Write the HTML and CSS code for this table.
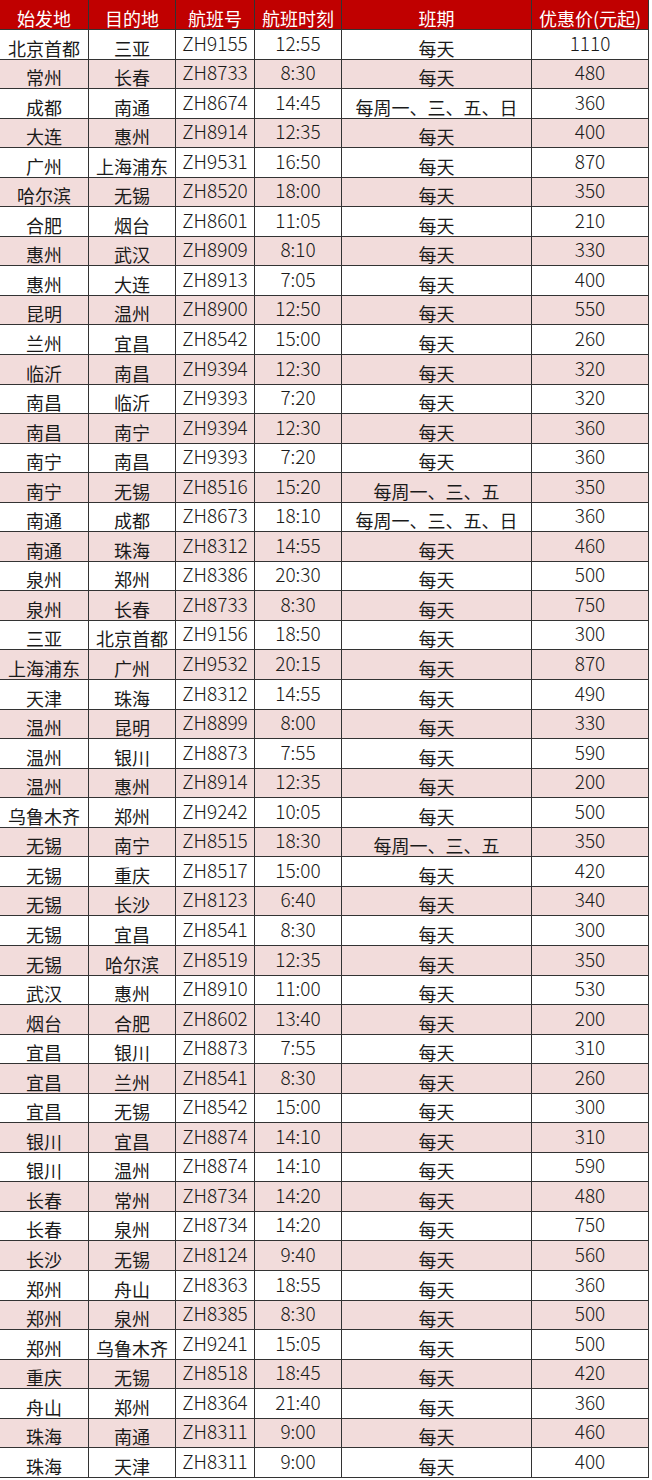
FILE: index.html
```html
<!DOCTYPE html>
<html lang="zh-CN">
<head>
<meta charset="utf-8">
<title>航班时刻表</title>
<link rel="stylesheet" href="styles.css">
</head>
<body>
<div class="table">
  <div class="row head">
    <div class="c">始发地</div><div class="c">目的地</div><div class="c">航班号</div><div class="c">航班时刻</div><div class="c">班期</div><div class="c">优惠价(元起)</div>
  </div>
  <div class="row"><div class="c">北京首都</div><div class="c">三亚</div><div class="c n">ZH9155</div><div class="c n">12:55</div><div class="c">每天</div><div class="c n">1110</div></div>
  <div class="row alt"><div class="c">常州</div><div class="c">长春</div><div class="c n">ZH8733</div><div class="c n">8:30</div><div class="c">每天</div><div class="c n">480</div></div>
  <div class="row"><div class="c">成都</div><div class="c">南通</div><div class="c n">ZH8674</div><div class="c n">14:45</div><div class="c">每周一、三、五、日</div><div class="c n">360</div></div>
  <div class="row alt"><div class="c">大连</div><div class="c">惠州</div><div class="c n">ZH8914</div><div class="c n">12:35</div><div class="c">每天</div><div class="c n">400</div></div>
  <div class="row"><div class="c">广州</div><div class="c">上海浦东</div><div class="c n">ZH9531</div><div class="c n">16:50</div><div class="c">每天</div><div class="c n">870</div></div>
  <div class="row alt"><div class="c">哈尔滨</div><div class="c">无锡</div><div class="c n">ZH8520</div><div class="c n">18:00</div><div class="c">每天</div><div class="c n">350</div></div>
  <div class="row"><div class="c">合肥</div><div class="c">烟台</div><div class="c n">ZH8601</div><div class="c n">11:05</div><div class="c">每天</div><div class="c n">210</div></div>
  <div class="row alt"><div class="c">惠州</div><div class="c">武汉</div><div class="c n">ZH8909</div><div class="c n">8:10</div><div class="c">每天</div><div class="c n">330</div></div>
  <div class="row"><div class="c">惠州</div><div class="c">大连</div><div class="c n">ZH8913</div><div class="c n">7:05</div><div class="c">每天</div><div class="c n">400</div></div>
  <div class="row alt"><div class="c">昆明</div><div class="c">温州</div><div class="c n">ZH8900</div><div class="c n">12:50</div><div class="c">每天</div><div class="c n">550</div></div>
  <div class="row"><div class="c">兰州</div><div class="c">宜昌</div><div class="c n">ZH8542</div><div class="c n">15:00</div><div class="c">每天</div><div class="c n">260</div></div>
  <div class="row alt"><div class="c">临沂</div><div class="c">南昌</div><div class="c n">ZH9394</div><div class="c n">12:30</div><div class="c">每天</div><div class="c n">320</div></div>
  <div class="row"><div class="c">南昌</div><div class="c">临沂</div><div class="c n">ZH9393</div><div class="c n">7:20</div><div class="c">每天</div><div class="c n">320</div></div>
  <div class="row alt"><div class="c">南昌</div><div class="c">南宁</div><div class="c n">ZH9394</div><div class="c n">12:30</div><div class="c">每天</div><div class="c n">360</div></div>
  <div class="row"><div class="c">南宁</div><div class="c">南昌</div><div class="c n">ZH9393</div><div class="c n">7:20</div><div class="c">每天</div><div class="c n">360</div></div>
  <div class="row alt"><div class="c">南宁</div><div class="c">无锡</div><div class="c n">ZH8516</div><div class="c n">15:20</div><div class="c">每周一、三、五</div><div class="c n">350</div></div>
  <div class="row"><div class="c">南通</div><div class="c">成都</div><div class="c n">ZH8673</div><div class="c n">18:10</div><div class="c">每周一、三、五、日</div><div class="c n">360</div></div>
  <div class="row alt"><div class="c">南通</div><div class="c">珠海</div><div class="c n">ZH8312</div><div class="c n">14:55</div><div class="c">每天</div><div class="c n">460</div></div>
  <div class="row"><div class="c">泉州</div><div class="c">郑州</div><div class="c n">ZH8386</div><div class="c n">20:30</div><div class="c">每天</div><div class="c n">500</div></div>
  <div class="row alt"><div class="c">泉州</div><div class="c">长春</div><div class="c n">ZH8733</div><div class="c n">8:30</div><div class="c">每天</div><div class="c n">750</div></div>
  <div class="row"><div class="c">三亚</div><div class="c">北京首都</div><div class="c n">ZH9156</div><div class="c n">18:50</div><div class="c">每天</div><div class="c n">300</div></div>
  <div class="row alt"><div class="c">上海浦东</div><div class="c">广州</div><div class="c n">ZH9532</div><div class="c n">20:15</div><div class="c">每天</div><div class="c n">870</div></div>
  <div class="row"><div class="c">天津</div><div class="c">珠海</div><div class="c n">ZH8312</div><div class="c n">14:55</div><div class="c">每天</div><div class="c n">490</div></div>
  <div class="row alt"><div class="c">温州</div><div class="c">昆明</div><div class="c n">ZH8899</div><div class="c n">8:00</div><div class="c">每天</div><div class="c n">330</div></div>
  <div class="row"><div class="c">温州</div><div class="c">银川</div><div class="c n">ZH8873</div><div class="c n">7:55</div><div class="c">每天</div><div class="c n">590</div></div>
  <div class="row alt"><div class="c">温州</div><div class="c">惠州</div><div class="c n">ZH8914</div><div class="c n">12:35</div><div class="c">每天</div><div class="c n">200</div></div>
  <div class="row"><div class="c">乌鲁木齐</div><div class="c">郑州</div><div class="c n">ZH9242</div><div class="c n">10:05</div><div class="c">每天</div><div class="c n">500</div></div>
  <div class="row alt"><div class="c">无锡</div><div class="c">南宁</div><div class="c n">ZH8515</div><div class="c n">18:30</div><div class="c">每周一、三、五</div><div class="c n">350</div></div>
  <div class="row"><div class="c">无锡</div><div class="c">重庆</div><div class="c n">ZH8517</div><div class="c n">15:00</div><div class="c">每天</div><div class="c n">420</div></div>
  <div class="row alt"><div class="c">无锡</div><div class="c">长沙</div><div class="c n">ZH8123</div><div class="c n">6:40</div><div class="c">每天</div><div class="c n">340</div></div>
  <div class="row"><div class="c">无锡</div><div class="c">宜昌</div><div class="c n">ZH8541</div><div class="c n">8:30</div><div class="c">每天</div><div class="c n">300</div></div>
  <div class="row alt"><div class="c">无锡</div><div class="c">哈尔滨</div><div class="c n">ZH8519</div><div class="c n">12:35</div><div class="c">每天</div><div class="c n">350</div></div>
  <div class="row"><div class="c">武汉</div><div class="c">惠州</div><div class="c n">ZH8910</div><div class="c n">11:00</div><div class="c">每天</div><div class="c n">530</div></div>
  <div class="row alt"><div class="c">烟台</div><div class="c">合肥</div><div class="c n">ZH8602</div><div class="c n">13:40</div><div class="c">每天</div><div class="c n">200</div></div>
  <div class="row"><div class="c">宜昌</div><div class="c">银川</div><div class="c n">ZH8873</div><div class="c n">7:55</div><div class="c">每天</div><div class="c n">310</div></div>
  <div class="row alt"><div class="c">宜昌</div><div class="c">兰州</div><div class="c n">ZH8541</div><div class="c n">8:30</div><div class="c">每天</div><div class="c n">260</div></div>
  <div class="row"><div class="c">宜昌</div><div class="c">无锡</div><div class="c n">ZH8542</div><div class="c n">15:00</div><div class="c">每天</div><div class="c n">300</div></div>
  <div class="row alt"><div class="c">银川</div><div class="c">宜昌</div><div class="c n">ZH8874</div><div class="c n">14:10</div><div class="c">每天</div><div class="c n">310</div></div>
  <div class="row"><div class="c">银川</div><div class="c">温州</div><div class="c n">ZH8874</div><div class="c n">14:10</div><div class="c">每天</div><div class="c n">590</div></div>
  <div class="row alt"><div class="c">长春</div><div class="c">常州</div><div class="c n">ZH8734</div><div class="c n">14:20</div><div class="c">每天</div><div class="c n">480</div></div>
  <div class="row"><div class="c">长春</div><div class="c">泉州</div><div class="c n">ZH8734</div><div class="c n">14:20</div><div class="c">每天</div><div class="c n">750</div></div>
  <div class="row alt"><div class="c">长沙</div><div class="c">无锡</div><div class="c n">ZH8124</div><div class="c n">9:40</div><div class="c">每天</div><div class="c n">560</div></div>
  <div class="row"><div class="c">郑州</div><div class="c">舟山</div><div class="c n">ZH8363</div><div class="c n">18:55</div><div class="c">每天</div><div class="c n">360</div></div>
  <div class="row alt"><div class="c">郑州</div><div class="c">泉州</div><div class="c n">ZH8385</div><div class="c n">8:30</div><div class="c">每天</div><div class="c n">500</div></div>
  <div class="row"><div class="c">郑州</div><div class="c">乌鲁木齐</div><div class="c n">ZH9241</div><div class="c n">15:05</div><div class="c">每天</div><div class="c n">500</div></div>
  <div class="row alt"><div class="c">重庆</div><div class="c">无锡</div><div class="c n">ZH8518</div><div class="c n">18:45</div><div class="c">每天</div><div class="c n">420</div></div>
  <div class="row"><div class="c">舟山</div><div class="c">郑州</div><div class="c n">ZH8364</div><div class="c n">21:40</div><div class="c">每天</div><div class="c n">360</div></div>
  <div class="row alt"><div class="c">珠海</div><div class="c">南通</div><div class="c n">ZH8311</div><div class="c n">9:00</div><div class="c">每天</div><div class="c n">460</div></div>
  <div class="row"><div class="c">珠海</div><div class="c">天津</div><div class="c n">ZH8311</div><div class="c n">9:00</div><div class="c">每天</div><div class="c n">400</div></div>
</div>
</body>
</html>
```

FILE: styles.css
```css
html, body {
  margin: 0;
  padding: 0;
  background: #ffffff;
}

body {
  font-family: "Noto Sans CJK SC", "Noto Sans", sans-serif;
  color: #1a1a1a;
}

.table {
  width: 649px;
  display: flex;
  flex-direction: column;
}

.row {
  display: grid;
  grid-template-columns: 89px 87px 79px 87px 190px 117px;
  height: 29.55px;
  background: #ffffff;
}

.row.alt {
  background: #f2dcdb;
}

.row.head {
  height: 30px;
  background: #c00000;
  color: #ffffff;
}

.c {
  box-sizing: border-box;
  display: flex;
  align-items: flex-end;
  justify-content: center;
  border-right: 1px solid #333333;
  border-bottom: 1px solid #333333;
  font-size: 18px;
  line-height: 20px;
  padding-bottom: 1px;
  white-space: nowrap;
  overflow: visible;
}

.c.n {
  font-size: 19px;
  font-weight: 300;
  padding-bottom: 6px;
}
```
